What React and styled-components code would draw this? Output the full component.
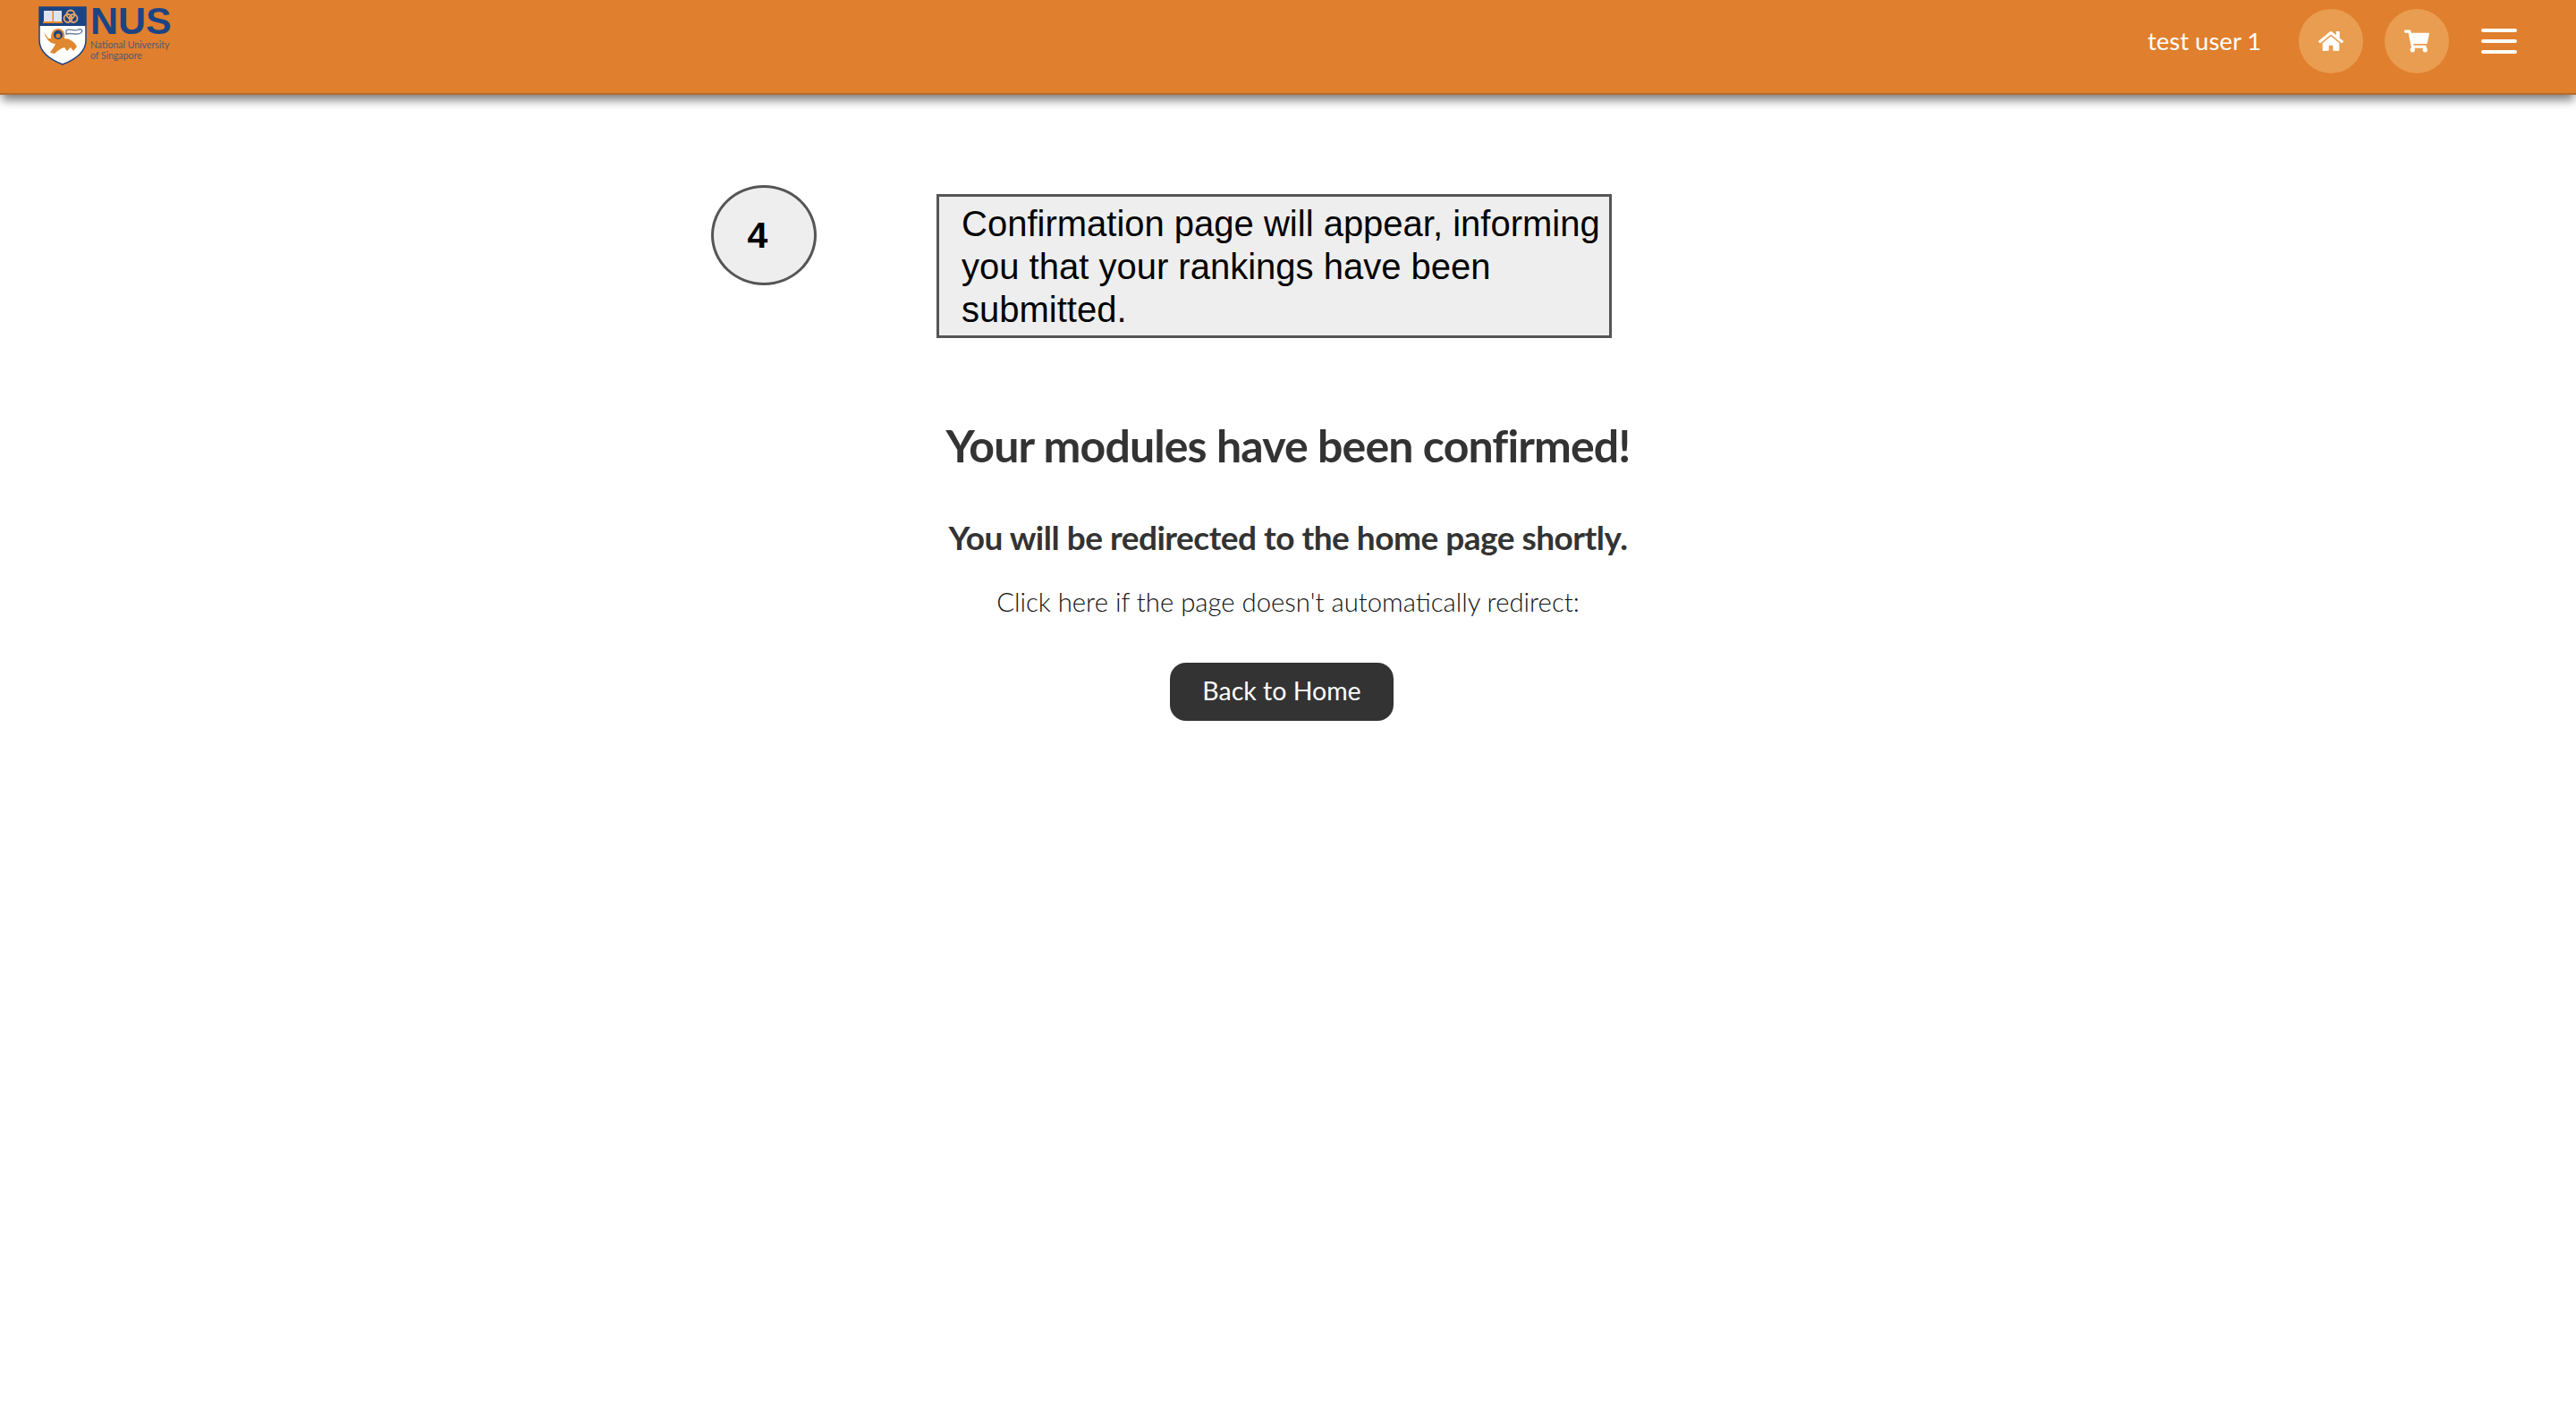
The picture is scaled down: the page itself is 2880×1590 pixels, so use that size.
import styled, { createGlobalStyle } from 'styled-components'
import { FaHome, FaShoppingCart } from 'react-icons/fa'

const GlobalStyle = createGlobalStyle`
	body {
		margin: 0;
		background-color: white;
		font-family: 'Lato', 'Liberation Sans', sans-serif;
	}
`

function Shield() {
	return (
		<svg width="54" height="66" viewBox="0 0 54 66">
			<path d="M1 1H53V38C53 52 40 60 27 65C14 60 1 52 1 38Z" fill="#ffffff" stroke="#1c4483" strokeWidth="1.5" />
			<path d="M1 1H53V22H1Z" fill="#1c4483" />
			<rect x="6" y="5" width="20" height="13" fill="#dfe3ee" />
			<rect x="15.5" y="5" width="1.5" height="13" fill="#e8882e" />
			<rect x="5" y="17" width="22" height="2" fill="#e8882e" />
			<g fill="none" stroke="#e6a565" strokeWidth="1.8">
				<circle cx="36" cy="9" r="4.5" />
				<circle cx="33" cy="13.5" r="4.5" />
				<circle cx="39" cy="13.5" r="4.5" />
			</g>
			<path
				d="M6 29L11 36L14 36C14 30 16 25 22 25C28 25 30 30 29 36C34 36 40 39 43 45L39 50L36 46L32 50L29 46C25 47 21 50 18 53L13 52C16 47 18 45 19 42C14 42 9 38 6 29Z"
				fill="#e0882f"
			/>
			<circle cx="22" cy="32" r="5" fill="#1c4483" />
			<circle cx="22" cy="33" r="2.6" fill="#e0882f" />
			<path d="M31 27C35 24 41 29 45 26C49 25 50 28 47 30C42 33 36 29 31 31Z" fill="none" stroke="#6f7f99" strokeWidth="1.4" />
		</svg>
	)
}

export default function App() {
	return (
		<>
			<GlobalStyle />
			<Header>
				<Logo>
					<Shield />
					<LogoText>
						<LogoName>NUS</LogoName>
						<LogoSub>National University</LogoSub>
						<LogoSub>of Singapore</LogoSub>
					</LogoText>
				</Logo>
				<Nav>
					<UserName>test user 1</UserName>
					<IconButton>
						<FaHome />
					</IconButton>
					<IconButton>
						<FaShoppingCart />
					</IconButton>
					<Burger>
						<span />
						<span />
						<span />
					</Burger>
				</Nav>
			</Header>
			<Main>
				<StepRow>
					<StepCircle>4</StepCircle>
					<StepNote>Confirmation page will appear, informing you that your rankings have been submitted.</StepNote>
				</StepRow>
				<Title>Your modules have been confirmed!</Title>
				<SubTitle>You will be redirected to the home page shortly.</SubTitle>
				<Hint>Click here if the page doesn't automatically redirect:</Hint>
				<HomeButton>Back to Home</HomeButton>
			</Main>
		</>
	)
}

const Header = styled.header`
	height: 104px;
	display: flex;
	justify-content: space-between;
	align-items: flex-start;
	padding: 0 66px 0 43px;
	background-color: #e07f2e;
	border-bottom: 2px solid #b56a2c;
	box-shadow: 0 8px 10px -2px rgba(0, 0, 0, 0.5);
`
const Logo = styled.div`
	display: flex;
	align-items: flex-start;
	gap: 4px;
	padding-top: 7px;
`
const LogoText = styled.div`
	display: flex;
	flex-direction: column;
	color: #1c4483;
`
const LogoName = styled.div`
	font-family: 'Liberation Sans', sans-serif;
	font-weight: bold;
	font-size: 43px;
	line-height: 32px;
	margin-bottom: 5px;
`
const LogoSub = styled.div`
	font-size: 10.5px;
	line-height: 12px;
	color: #4c5b72;
	white-space: nowrap;
`
const Nav = styled.nav`
	display: flex;
	align-items: center;
	padding-top: 10px;
`
const UserName = styled.div`
	color: white;
	font-size: 27.5px;
	width: 169px;
	padding-bottom: 2px;
`
const IconButton = styled.div`
	width: 72px;
	height: 72px;
	margin-right: 24px;
	border-radius: 50%;
	background-color: #e99d50;
	color: white;
	font-size: 28px;
	display: flex;
	align-items: center;
	justify-content: center;
`
const Burger = styled.div`
	width: 40px;
	margin-left: 12px;
	display: flex;
	flex-direction: column;
	gap: 8px;
	span {
		height: 4px;
		border-radius: 2px;
		background-color: white;
	}
`
const Main = styled.main`
	display: flex;
	flex-direction: column;
	align-items: center;
	color: #333333;
`
const StepRow = styled.div`
	align-self: flex-start;
	display: flex;
	align-items: flex-start;
	gap: 134px;
	margin: 101px 0 0 795px;
`
const StepCircle = styled.div`
	box-sizing: border-box;
	width: 118px;
	height: 112px;
	padding-right: 14px;
	border: 3px solid #555555;
	border-radius: 50%;
	background-color: #eeeeee;
	color: black;
	font-family: 'Liberation Sans', sans-serif;
	font-weight: bold;
	font-size: 41px;
	display: flex;
	align-items: center;
	justify-content: center;
`
const StepNote = styled.div`
	box-sizing: border-box;
	width: 755px;
	height: 161px;
	margin-top: 10px;
	padding: 6px 8px 0 25px;
	border: 3px solid #555555;
	background-color: #eeeeee;
	color: black;
	font-family: 'Liberation Sans', sans-serif;
	font-size: 40px;
	line-height: 48px;
`
const Title = styled.h1`
	margin: 90px 0 0;
	font-size: 50px;
	line-height: 60px;
	font-weight: bold;
	letter-spacing: -0.87px;
`
const SubTitle = styled.h2`
	margin: 51px 0 0;
	font-size: 37px;
	line-height: 44px;
	font-weight: bold;
	letter-spacing: -0.5px;
`
const Hint = styled.p`
	margin: 32px 0 0;
	font-size: 29.3px;
	line-height: 36px;
	font-weight: 300;
	color: #111111;
`
const HomeButton = styled.button`
	width: 250px;
	height: 65px;
	margin: 50px 14px 0 0;
	padding-bottom: 4px;
	border: none;
	border-radius: 18px;
	background-color: #333333;
	color: white;
	font-family: 'Lato', sans-serif;
	font-size: 28.5px;
	cursor: pointer;
`
